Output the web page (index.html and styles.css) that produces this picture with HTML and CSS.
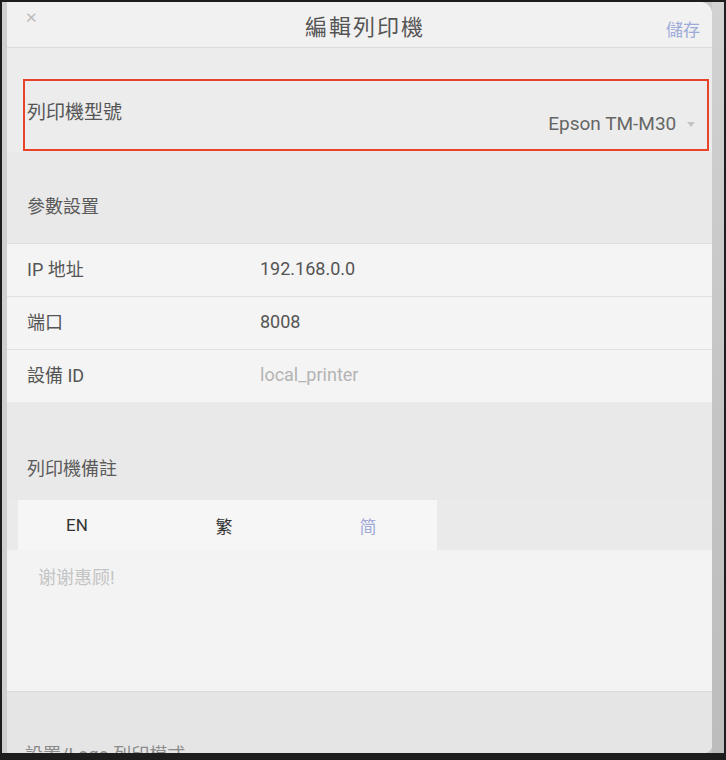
FILE: index.html
```html
<!DOCTYPE html>
<html>
<head>
	<meta charset="utf-8" />
	<title>編輯列印機</title>
	<link rel="stylesheet" href="styles.css">
</head>
<body>
<div class="frame">
	<div class="edge"></div>

	<div class="modal">
		<div class="bar">
			<span class="close">&#x2715;</span>
			<h1 class="title">編輯列印機</h1>
			<span class="save">儲存</span>
		</div>

		<!-- printer model -->
		<div class="model">
			<div class="model-box">
				<span class="model-label">列印機型號</span>
				<span class="model-value">Epson TM-M30 <i class="caret"></i></span>
			</div>
		</div>

		<div class="group">參數設置</div>
		<div class="row"><span class="key">IP 地址</span><span class="val">192.168.0.0</span></div>
		<div class="row"><span class="key">端口</span><span class="val">8008</span></div>
		<div class="row"><span class="key">設備 ID</span><span class="val muted">local_printer</span></div>

		<div class="group notes">列印機備註</div>
		<div class="tabs-line">
			<div class="tabs">
				<span class="tab">EN</span>
				<span class="tab">繁</span>
				<span class="tab on">简</span>
			</div>
		</div>
		<div class="note">谢谢惠顾!</div>

		<div class="foot"><span class="foot-text">設置/Logo 列印模式</span></div>
	</div>

	<div class="edge right"></div>
</div>
</body>
</html>
```

FILE: styles.css
```css
html, body {
  margin: 0;
  padding: 0;
}

body {
  background-color: #1d1d1d;
  font-family: Roboto, "Noto Sans CJK TC", sans-serif;
  color: #4a4a4a;
  height: 760px;
  overflow: hidden;
}

.frame {
  display: flex;
  margin: 2px 2px 0 2px;
  height: 751px;
  background-color: #c7c7c7;
}

.edge {
  width: 5px;
  background-color: #cfcfcf;
}
.edge.right {
  width: 12px;
  background: linear-gradient(to bottom, #d2d2d2, #c3c3c3 60%, #bdbdbd);
}

.modal {
  width: 705px;
  display: flex;
  flex-direction: column;
  background-color: #efefef;
  border-radius: 0 12px 8px 2px;
  overflow: hidden;
}

/* header */
.bar {
  height: 45px;
  display: flex;
  align-items: center;
  justify-content: space-between;
  padding: 0 12px 0 18px;
  background-color: #f1f1f1;
  border-bottom: 1px solid #dcdcdc;
}
.close {
  font-size: 15px;
  color: #bcbcbc;
  margin-top: -14px;
}
.title {
  margin: 0 0 0 26px;
  font-weight: normal;
  font-size: 22px;
  letter-spacing: 2px;
  color: #555;
}
.save {
  font-size: 17px;
  color: #9eabd9;
  margin-top: 8px;
}

/* printer model */
.model {
  height: 104px;
  padding: 31px 3px 0 16px;
  box-sizing: border-box;
  background-color: #ececec;
}
.model-box {
  height: 72px;
  box-sizing: border-box;
  border: 2px solid #e8432a;
  display: flex;
  justify-content: space-between;
  padding: 19px 12px 0 2px;
}
.model-label {
  font-size: 19px;
  color: #555;
  line-height: 26px;
}
.model-value {
  font-size: 19px;
  color: #666;
  margin-top: 12px;
  line-height: 24px;
}
.caret {
  display: inline-block;
  margin-left: 6px;
  vertical-align: middle;
  border-left: 4px solid transparent;
  border-right: 4px solid transparent;
  border-top: 5px solid #c4c4c4;
}

/* settings */
.group {
  height: 91px;
  box-sizing: border-box;
  padding: 43px 20px 0;
  font-size: 18px;
  line-height: 24px;
  color: #5a5a5a;
  background-color: #e9e9e9;
}
.group.notes {
  height: 98px;
  padding-top: 55px;
}

.row {
  height: 53px;
  box-sizing: border-box;
  display: flex;
  align-items: center;
  padding: 0 20px 4px;
  background-color: #f4f4f4;
  border-top: 1px solid #e0e0e0;
  font-size: 18px;
}
.key {
  width: 233px;
  color: #555;
}
.val {
  color: #555;
}
.val.muted {
  color: #b3b3b3;
}

/* notes */
.tabs-line {
  height: 50px;
  background-color: #eaeaea;
  padding-left: 11px;
}
.tabs {
  width: 419px;
  height: 100%;
  display: grid;
  grid-template-columns: 118px 176px 112px;
  align-items: center;
  background-color: #f6f6f6;
}
.tab {
  text-align: center;
  font-size: 17px;
  color: #333;
}
.tab.on {
  color: #9ea9d6;
}

.note {
  height: 141px;
  box-sizing: border-box;
  padding: 16px 31px 0;
  font-size: 18px;
  line-height: 24px;
  color: #c4c4c4;
  background-color: #f3f3f3;
}

.foot {
  flex: 1;
  position: relative;
  background-color: #e5e5e5;
  border-top: 1px solid #dadada;
  overflow: hidden;
}
.foot-text {
  position: absolute;
  left: 18px;
  bottom: -14px;
  font-size: 18px;
  line-height: 24px;
  color: #8a8a8a;
}
```
